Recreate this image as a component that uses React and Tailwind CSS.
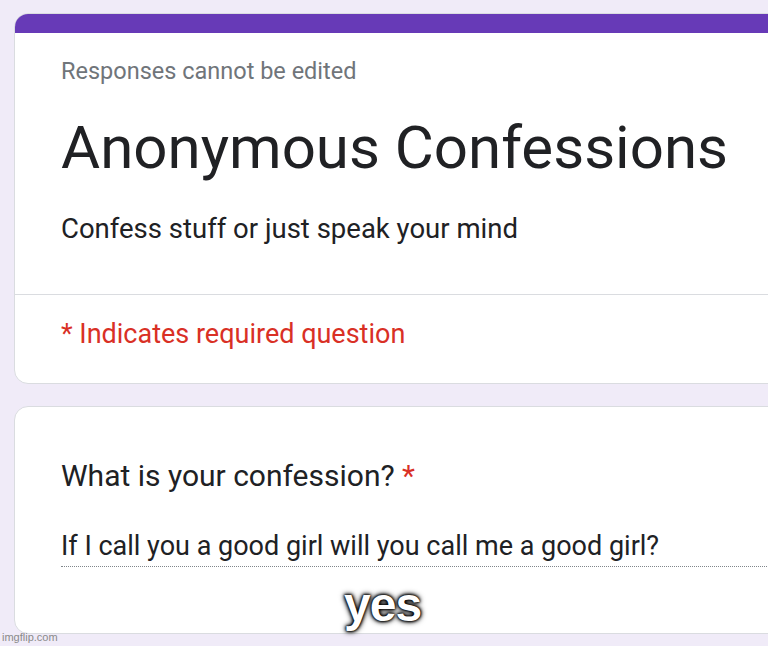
import React from "react";

function App() {
  return (
    <div className="relative h-[646px] w-[768px] overflow-hidden bg-[#f0ebf8] font-['Roboto',sans-serif]">
      <div className="flex w-[800px] flex-col gap-[22px] pl-[14px] pt-[13px]">

        {/* Header card */}
        <div className="overflow-hidden rounded-[14px] border border-[#dadce0] bg-white">
          <div className="h-[19px] bg-[#673ab7]"></div>
          <div className="border-b border-[#dadce0] px-[46px] pt-[26px] pb-[50px]">
            <div className="text-[23.5px] leading-[24px] text-[#70757a]">
              Responses cannot be edited
            </div>
            <h1 className="mt-[33px] text-[60px] leading-[64px] text-[#202124]">
              Anonymous Confessions
            </h1>
            <p className="mt-[34px] text-[27.5px] leading-[30px] text-[#202124]">
              Confess stuff or just speak your mind
            </p>
          </div>
          <div className="px-[46px] pt-[24px] pb-[34px] text-[27px] leading-[30px] text-[#d93025]">
            * Indicates required question
          </div>
        </div>

        {/* Question card */}
        <div className="h-[228px] rounded-[14px] border border-[#dadce0] bg-white pl-[46px] pt-[52px]">
          <div className="text-[30px] leading-[34px] text-[#202124]">
            What is your confession? <span className="text-[#d93025]">*</span>
          </div>
          <div className="mt-[38px] border-b border-dotted border-[#80868b] pb-[5px] text-[27px] leading-[30px] text-[#202124]">
            If I call you a good girl will you call me a good girl?
          </div>
        </div>
      </div>

      {/* caption */}
      <div className="absolute left-[344px] top-[580px] font-['Liberation_Sans',sans-serif] text-[48px] font-bold leading-[50px] tracking-[-1px] text-white [text-shadow:0_0_2px_#000,0_0_3px_#000,0_0_4px_#000,0_0_6px_#000]">
        yes
      </div>

      <div className="absolute left-[2px] top-[630px] font-['Liberation_Sans',sans-serif] text-[11px] leading-[14px] text-[#8a8a8a]">
        imgflip.com
      </div>
    </div>
  );
}

export default App;
